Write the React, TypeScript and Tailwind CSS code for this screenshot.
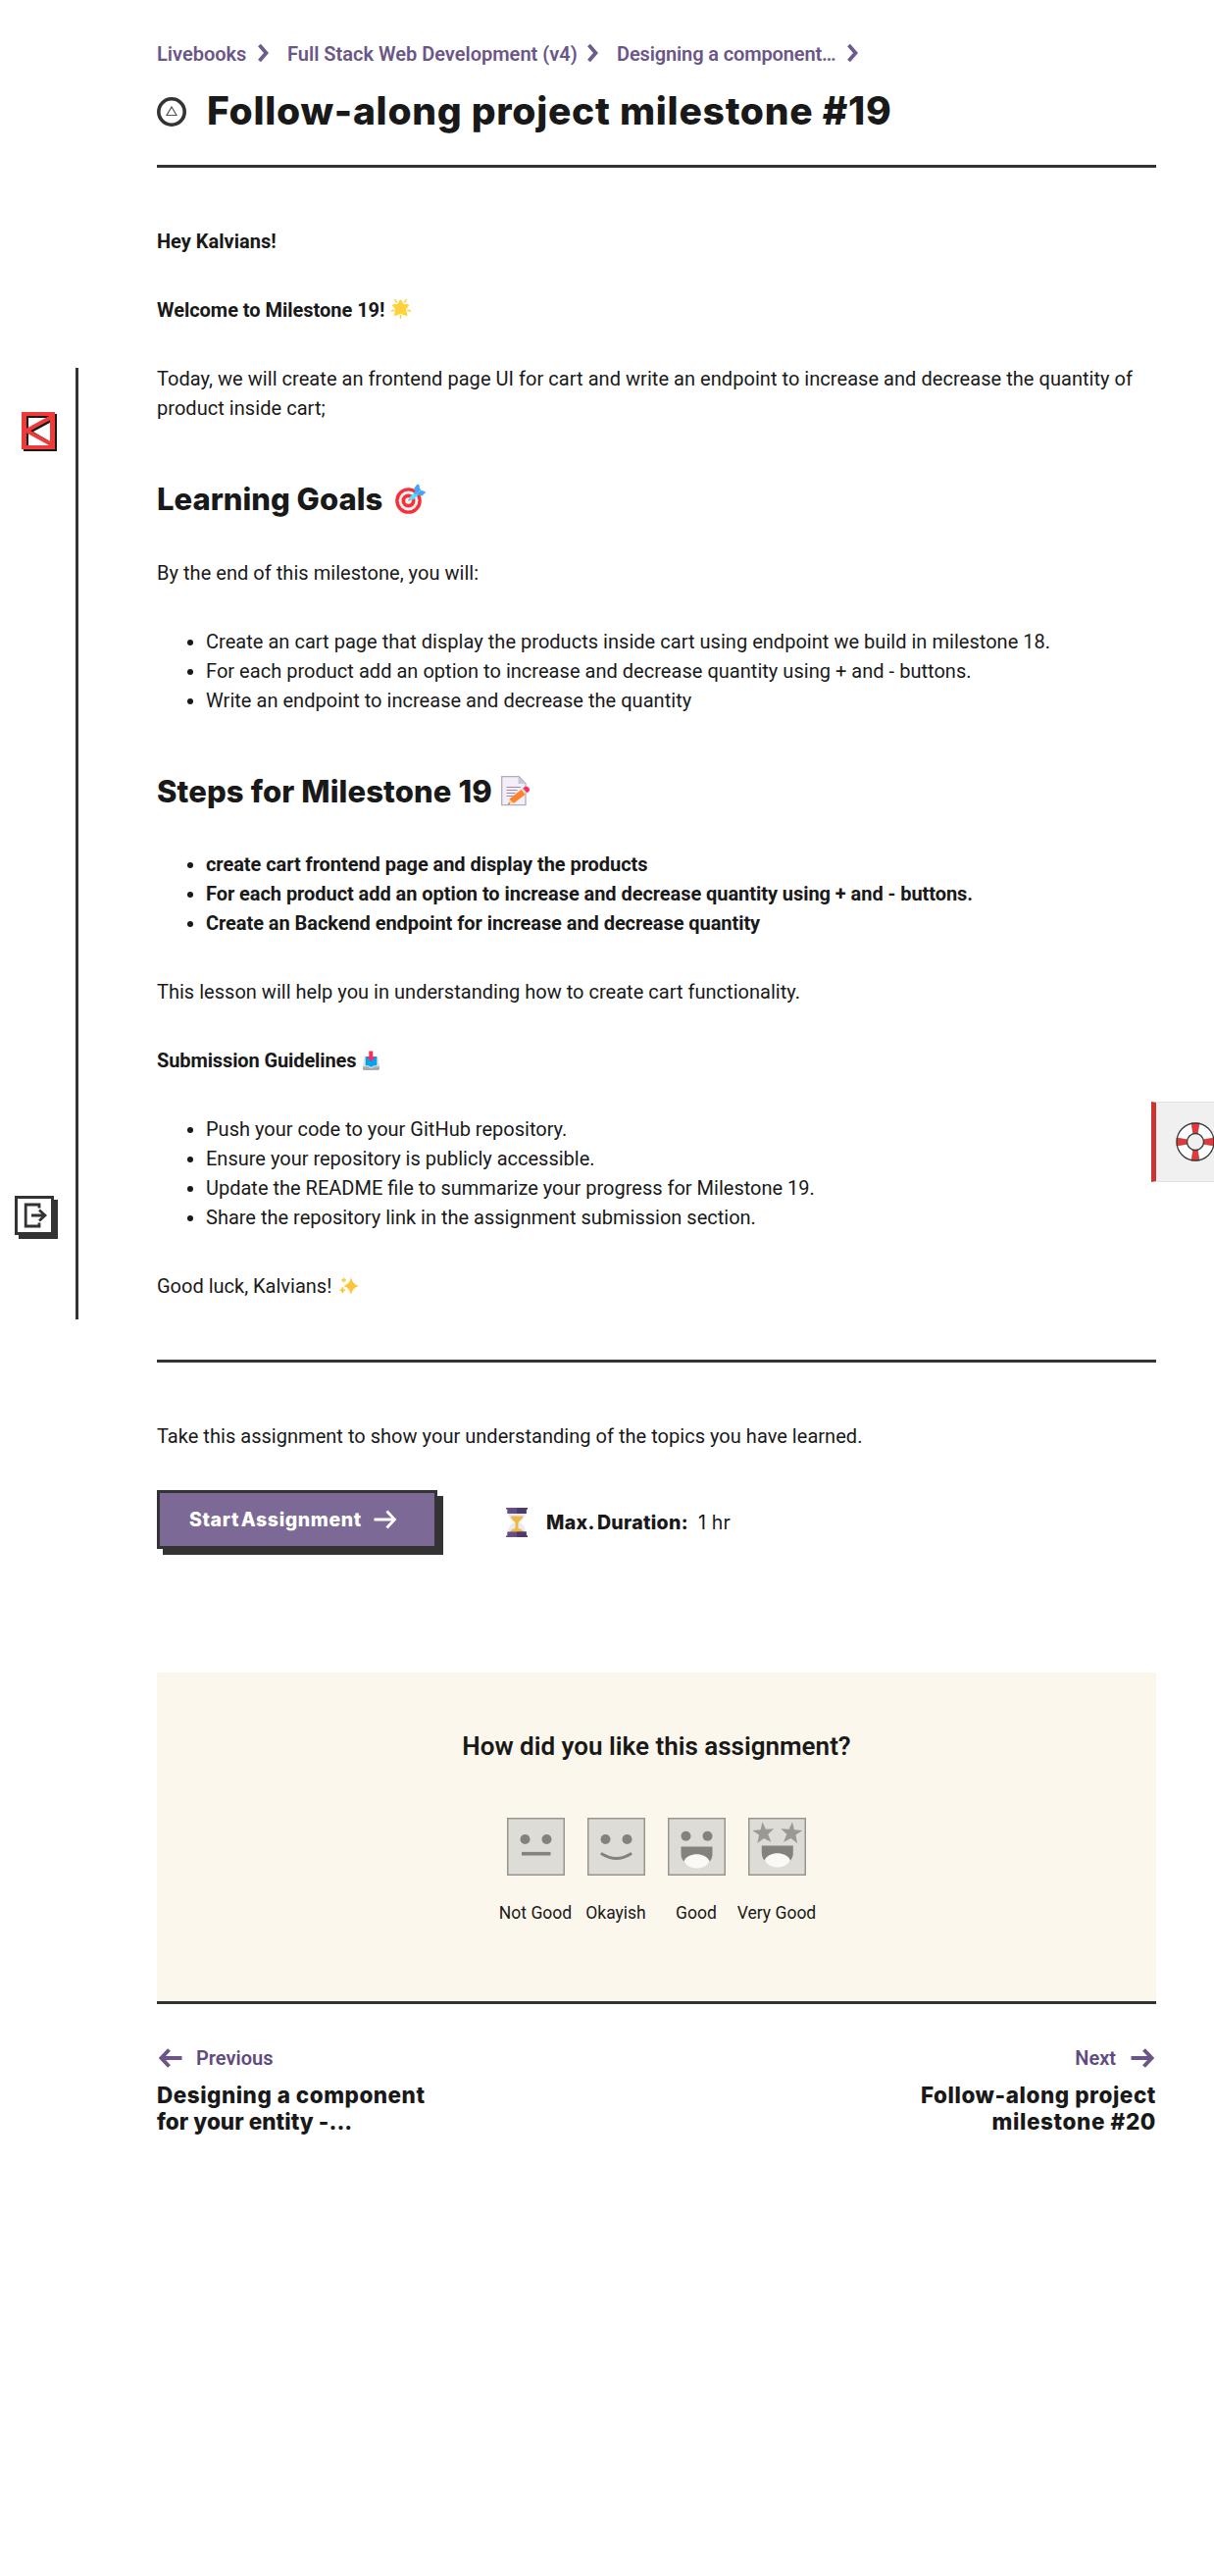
import type { ReactNode } from "react";

const Chevron = ({ className = "" }: { className?: string }) => (
  <svg className={"shrink-0 " + className} width="12" height="18" viewBox="0 0 12 18" fill="none">
    <path d="M1.500 1 8.500 9 1.500 17" stroke="#6f5a90" strokeWidth="3.800" />
  </svg>
);

const Arrow = ({ color, left, stroke = 4 }: { color: string; left?: boolean; stroke?: number }) => (
  <svg className={left ? "shrink-0 rotate-180" : "shrink-0"} width="24" height="20" viewBox="0 0 24 20" fill="none">
    <path d="M0.5 10H21M13.500 1.500 21.500 10l-8 8.500" stroke={color} strokeWidth={stroke} />
  </svg>
);

const GlowStar = () => (
  <svg width="20" height="20" viewBox="0 0 20 20" className="ml-[7px] -mt-[3px] shrink-0">
    <path
      d="M9.500 1.500l2.600 4.300 5 .4-3.200 4 1.600 5.800-6-2.200-5.500 2.200 1.300-5.800L2 6.200l5-.4z"
      fill="#ffd23e"
      stroke="#ffd23e"
      strokeWidth="2"
      strokeLinejoin="round"
    />
    <path d="M4 .8 5.300 3M15 .8 13.800 3M.2 12l2.800-.6M19.800 12l-2.800-.6M9.500 16.500v2.700" stroke="#ffd23e" strokeWidth="1.600" strokeLinecap="round" />
  </svg>
);

const Target = () => (
  <svg width="32" height="31" viewBox="0 0 32 31" className="ml-[13px] -mt-px shrink-0">
    <circle cx="13.500" cy="17.500" r="13.300" fill="#f92f36" />
    <circle cx="13.500" cy="17.500" r="9.900" fill="#f4f4f6" />
    <circle cx="13.500" cy="17.500" r="7" fill="#f92f36" />
    <circle cx="13.500" cy="17.500" r="3.300" fill="#f4f4f6" />
    <path d="M13.500 17.500 19 12" stroke="#9b9ba8" strokeWidth="1.600" />
    <path d="M15 13.500 24 5.500l3 3-8.500 7.800c-2 1.500-5.200-.8-3.500-2.800z" fill="#50e2ff" />
    <path d="M19.500 4.500 22.500.5l2 .8.600 4.500-4.800 4.500zM31.500 8.500l-4 4-2.600-.4-3.500-.8 5-4.500z" fill="#46a4fb" />
    <path d="m20 11 6-5.500" stroke="#46a4fb" strokeWidth="1.200" />
  </svg>
);

const Memo = () => (
  <svg width="30" height="31" viewBox="0 0 30 31" className="ml-[9px] shrink-0">
    <path d="M.7.7h17.500l6.800 7v22H.7z" fill="#f3eef8" stroke="#b4acbc" strokeWidth="1.300" />
    <path d="M17.500.7V8H25z" fill="#cdc4d6" />
    <path d="M5.500 11.500H20M5.500 14.500h11M5.500 17.500h9M5.500 20.500h7" stroke="#998ea4" strokeWidth="1.100" />
    <path d="m7.500 28.500 1.300-5.300 4.800 3.800z" fill="#ffce7c" />
    <path d="M8.500 23.500 20.500 14l4.300 4.800L13 27.800z" fill="#ff822d" />
    <path d="m20.500 14 2-1.500 4.300 5-2 1.300z" fill="#d3d3d3" />
    <path d="m22.300 12.600 2-1.500c3-1.200 6 2 4 4.600l-1.800 1.500z" fill="#fc2c60" />
    <path d="m7.300 28.900.500-1.600 1.200 1z" fill="#402a32" />
  </svg>
);

const Inbox = () => (
  <svg width="17" height="20" viewBox="0 0 17 20" className="ml-[7px] shrink-0">
    <path d="M2 6h13l2 9v3.500l-1 1H1l-1-1V15z" fill="#e3e3e3" />
    <path d="M0 16.300h5.500l1.500 1.500h3l1.500-1.500H17V19l-1 .9H1L0 19z" fill="#a9a9a9" />
    <path d="M2.700 6h11.600v9.200h-3.200l-1.300 1.400H7.200l-1.300-1.400H2.700z" fill="#00a6ed" />
    <path d="M6.300.5h4v6h2.500L8.300 11.300 3.800 6.500h2.500z" fill="#fc2c60" />
  </svg>
);

const Sparkles = () => (
  <svg width="20" height="18" viewBox="0 0 20 18" className="ml-[8px] shrink-0" fill="#fcc63c">
    <path d="M12 .3c1.600 5 2.700 6.600 7.700 8.700-5 2.100-6.100 3.700-7.700 8.700-1.600-5-2.700-6.600-7.500-8.700C9.300 6.900 10.400 5.300 12 .3z" />
    <path d="M4.600.6c.5 1.500.9 1.900 2.500 2.400-1.600.5-2 .9-2.500 2.400-.5-1.500-.9-1.900-2.500-2.400 1.600-.5 2-.9 2.500-2.400zM3.300 10c.6 2 1.100 2.600 3 3.200-1.900.6-2.400 1.200-3 3.200-.6-2-1.100-2.600-3-3.200 1.900-.6 2.400-1.200 3-3.200z" stroke="#fcc63c" strokeWidth=".6" />
  </svg>
);

const Hourglass = () => (
  <svg width="22" height="30" viewBox="0 0 22 30" className="shrink-0">
    <path d="M2 5h18c0 5-3 7-6 9.500C17 17 20 20 20 25H2c0-5 3-8 6-10.500C5 12 2 10 2 5z" fill="#e6ecf5" />
    <path d="M4.500 8.500h13c-.8 3.500-4 5-5 6.500v6c3 .8 5 2 5.500 4H4c.5-2 2.500-3.200 5.500-4v-6c-1-1.500-4.200-3-5-6.500z" fill="#f3b73e" />
    <path d="M0 0h22v1.500h-1.300V6H1.300V1.500H0zM1.300 24.500h19.400v4H22V30H0v-1.500h1.300z" fill="#654d88" />
    <path d="M11 0h11v1.500h-1.300V6H11zM11 24.500h9.700v4H22V30H11z" fill="#4d3a6b" />
  </svg>
);

const BrandMark = () => (
  <svg width="36" height="40" viewBox="0 0 36 40">
    <path d="M2 2h34v38H2z" fill="#181818" />
    <path d="M0 0h34v38H0z" fill="#ef3a3a" />
    <path d="M5 4h24v30H5z" fill="#fff" />
    <path d="M5 4h24v2H7v28H5z" fill="#181818" />
    <path d="M29.500 9 9 20l20.500 12" fill="none" stroke="#181818" strokeWidth="3" />
    <path d="M30.500 5 5 19l25.500 14" fill="none" stroke="#ef3a3a" strokeWidth="4" />
    <path d="M29 2h5v34h-5z" fill="#ef3a3a" />
  </svg>
);

const LogoutIcon = () => (
  <svg width="24" height="26" viewBox="0 0 24 26" fill="none" stroke="#333" strokeWidth="2.800">
    <path d="M16 5.500V2H2.200v22H16v-3.500" />
    <path d="M8 13h13.500M16 7.500l6 5.500-6 5.500" />
  </svg>
);

const Lifebuoy = () => (
  <svg width="40" height="40" viewBox="0 0 40 40" className="shrink-0">
    <circle cx="20" cy="20" r="19" fill="#fff" />
    <path d="M16 1h8l-1.800 11h-4.400zM16 39h8l-1.800-11h-4.400zM1 16v8l11-1.800v-4.400zM39 16v8l-11-1.800v-4.400z" fill="#ee3535" stroke="#5b3434" strokeWidth=".5" />
    <circle cx="20" cy="20" r="19" fill="none" stroke="#3a3a3a" strokeWidth="1.300" />
    <circle cx="20" cy="20" r="8.500" fill="#f0f0f0" stroke="#3a3a3a" strokeWidth="1.300" />
  </svg>
);

const Mouth = () => (
  <>
    <path d="M13.500 29.500h32V37c0 6-4 9.500-8 11H21.500c-4-1.500-8-5-8-11z" fill="#84827d" />
    <path d="M16.300 44.500C18.500 39.500 24 37.200 29.500 37.200s11 2.300 13.200 7.300c-2.700 4.500-7.700 7-13.200 7s-10.500-2.500-13.200-7z" fill="#faf9f5" />
  </>
);

const Eyes = ({ y }: { y: number }) => (
  <g fill="#84827d">
    <circle cx="18.500" cy={y} r="5" />
    <circle cx="40.500" cy={y} r="5" />
  </g>
);

const Face = ({ children }: { children: ReactNode }) => (
  <svg width="59" height="59" viewBox="0 0 59 59" fill="none">
    <rect x=".75" y=".75" width="57.500" height="57.500" fill="#dddcd7" stroke="#97958d" strokeWidth="1.500" />
    {children}
  </svg>
);

const star = "M0-11 2.700-3.500l8.300.1-6.400 5.100L7 10 0 5.400-7 10l2.400-8.300L-11-3.400l8.300-.1z";

const faces: { label: string; art: ReactNode }[] = [
  { label: "Not Good", art: <><Eyes y={22} /><path d="M15 36.700h29.500" stroke="#84827d" strokeWidth="3.600" /></> },
  { label: "Okayish", art: <><Eyes y={22} /><path d="M15 37q14.500 9 29 0" stroke="#84827d" strokeWidth="3.200" strokeLinecap="round" /></> },
  { label: "Good", art: <><Eyes y={18.7} /><Mouth /></> },
  {
    label: "Very Good",
    art: (
      <>
        <path d={star} transform="translate(15.500 15.500) rotate(-5)" fill="#9a9993" />
        <path d={star} transform="translate(44 15.500) rotate(5)" fill="#9a9993" />
        <g transform="translate(.3 -1)"><Mouth /></g>
      </>
    ),
  },
];

const Rule = ({ className = "" }: { className?: string }) => <div className={"h-[3px] bg-[#333] " + className} />;

const Heading = ({ children }: { children: ReactNode }) => (
  <h2 className="mt-[59px] mb-[40.6px] flex h-[38px] items-center font-['Inter'] text-[31px] leading-[38px] font-extrabold">{children}</h2>
);

const List = ({ items, className = "" }: { items: string[]; className?: string }) => (
  <ul className={"mt-10 " + className}>
    {items.map((t) => (
      <li key={t} className="flex h-[30px] items-center whitespace-nowrap pl-[31px]">
        <span className="mt-[2px] mr-[13px] size-[6px] rounded-full bg-[#191919]" />
        {t}
      </li>
    ))}
  </ul>
);

export default function App() {
  return (
    <div className="relative flex h-[2626px] w-[1238px] overflow-hidden bg-white font-['Roboto',sans-serif] text-[20px] leading-[30px] text-[#191919]">
      <aside className="mt-[375px] flex h-[970px] w-[80px] shrink-0 flex-col justify-between border-r-[3px] border-[#333] pt-[45px] pb-[86px]">
        <div className="pl-[22px]">
          <BrandMark />
        </div>
        <div className="ml-[15px] flex size-10 items-center justify-center border-3 border-[#333] bg-white pl-[2px] shadow-[4px_4px_0_#333]">
          <LogoutIcon />
        </div>
      </aside>

      <main className="ml-[80px] w-[1019px] shrink-0 pt-10">
        <nav className="flex h-[30px] items-center whitespace-nowrap font-semibold text-[#6b5688]">
          <span className="w-[103px]">Livebooks</span>
          <Chevron className="-mt-[3px]" />
          <span className="ml-[18px] w-[306px]">Full Stack Web Development (v4)</span>
          <Chevron className="-mt-[3px]" />
          <span className="ml-[18px] w-[235px] tracking-[-0.13px]">Designing a component…</span>
          <Chevron className="-mt-[3px]" />
        </nav>
        <div className="mt-[19px] flex h-12 items-center">
          <svg width="30" height="30" viewBox="0 0 30 30" fill="none" className="mr-[21px] mt-[2px]">
            <circle cx="15" cy="15" r="13.200" stroke="#333" strokeWidth="3.600" />
            <path d="m15 10 5 8.500H10z" stroke="#555" strokeWidth="1.200" />
          </svg>
          <h1 className="whitespace-nowrap font-['Inter'] text-[39px] leading-[48px] font-extrabold tracking-[0.73px]">
            Follow-along project milestone #19
          </h1>
        </div>
        <Rule className="mt-[31px]" />

        <article>
          <p className="mt-[60px] font-bold">Hey Kalvians!</p>
          <p className="mt-10 flex items-center font-bold tracking-[-0.03px]">Welcome to Milestone 19! <GlowStar /></p>
          <p className="mt-10 tracking-[0.046px]">
            Today, we will create an frontend page UI for cart and write an endpoint to increase and decrease the quantity of
            <br />
            product inside cart;
          </p>
          <Heading><span>Learning Goals</span><Target /></Heading>
          <p className="tracking-[0.04px]">By the end of this milestone, you will:</p>
          <List
            className="tracking-[0.03px]"
            items={[
              "Create an cart page that display the products inside cart using endpoint we build in milestone 18.",
              "For each product add an option to increase and decrease quantity using + and - buttons.",
              "Write an endpoint to increase and decrease the quantity",
            ]}
          />
          <Heading><span className="tracking-[0.12px]">Steps for Milestone 19</span><Memo /></Heading>
          <List
            className="-mt-px font-bold tracking-[-0.06px]"
            items={[
              "create cart frontend page and display the products",
              "For each product add an option to increase and decrease quantity using + and - buttons.",
              "Create an Backend endpoint for increase and decrease quantity",
            ]}
          />
          <p className="mt-10 tracking-[0.02px]">This lesson will help you in understanding how to create cart functionality.</p>
          <p className="mt-10 flex items-center font-bold tracking-[-0.11px]">Submission Guidelines <Inbox /></p>
          <List
            items={[
              "Push your code to your GitHub repository.",
              "Ensure your repository is publicly accessible.",
              "Update the README file to summarize your progress for Milestone 19.",
              "Share the repository link in the assignment submission section.",
            ]}
          />
          <p className="mt-10 flex items-center">Good luck, Kalvians! <Sparkles /></p>
        </article>
        <Rule className="mt-[60px]" />

        <p className="mt-[60px] tracking-[0.03px]">Take this assignment to show your understanding of the topics you have learned.</p>
        <div className="mt-10 flex h-[60px] items-center whitespace-nowrap font-['Inter'] text-[19.500px]">
          <button className="flex h-[60px] w-[286px] items-center border-3 border-[#333] bg-[#7c6995] pl-[30px] font-extrabold text-white shadow-[6px_6px_0_#333]">
            <span className="w-[188px] text-left tracking-[0.6px] [word-spacing:-3px]">Start Assignment</span>
            <Arrow color="#fff" stroke={2.8} />
          </button>
          <div className="mt-[6px] ml-[70px] flex items-center">
            <Hourglass />
            <span className="ml-[19px] w-[155px] font-extrabold tracking-[0.33px] [word-spacing:-1.500px]">Max. Duration:</span>
            <span className="tracking-[0.2px]">1 hr</span>
          </div>
        </div>

        <section className="mt-[126px] flex h-[335px] flex-col items-center bg-[#fcf7ec] pt-[60px]">
          <h3 className="text-[26px] leading-[30px] font-semibold">How did you like this assignment?</h3>
          <div className="mt-[58px] -ml-px flex">
            {faces.map((f) => (
              <div key={f.label} className="flex w-[82px] flex-col items-center">
                <Face>{f.art}</Face>
                <span className="mt-[28px] whitespace-nowrap text-[17.500px] leading-5">{f.label}</span>
              </div>
            ))}
          </div>
        </section>
        <Rule />

        <footer className="mt-10 flex justify-between whitespace-nowrap font-['Inter'] text-[22.500px] leading-[27px] font-extrabold">
          <div>
            <div className="mb-[9px] flex h-[30px] items-center gap-[14px] pl-[2px] font-['Roboto'] text-[20px] font-semibold text-[#5f4b80]">
              <Arrow color="#6b5688" left /> Previous
            </div>
            <div className="tracking-[0.5px]">Designing a component</div>
            <div className="tracking-[0.05px]">for your entity -...</div>
          </div>
          <div className="text-right">
            <div className="mb-[9px] flex h-[30px] items-center justify-end gap-[15px] pr-[2px] font-['Roboto'] text-[20px] font-semibold text-[#5f4b80]">
              Next <Arrow color="#6b5688" />
            </div>
            <div className="tracking-[0.55px]">Follow-along project</div>
            <div className="tracking-[0.6px]">milestone #20</div>
          </div>
        </footer>
      </main>

      <div className="absolute top-[1123px] right-0 flex h-[82px] w-[64px] items-center overflow-hidden border-y border-l-[5px] border-y-[#e2e2e2] border-l-[#cc3333] bg-[#f0f0f0] pl-[20px]">
        <Lifebuoy />
      </div>
    </div>
  );
}
